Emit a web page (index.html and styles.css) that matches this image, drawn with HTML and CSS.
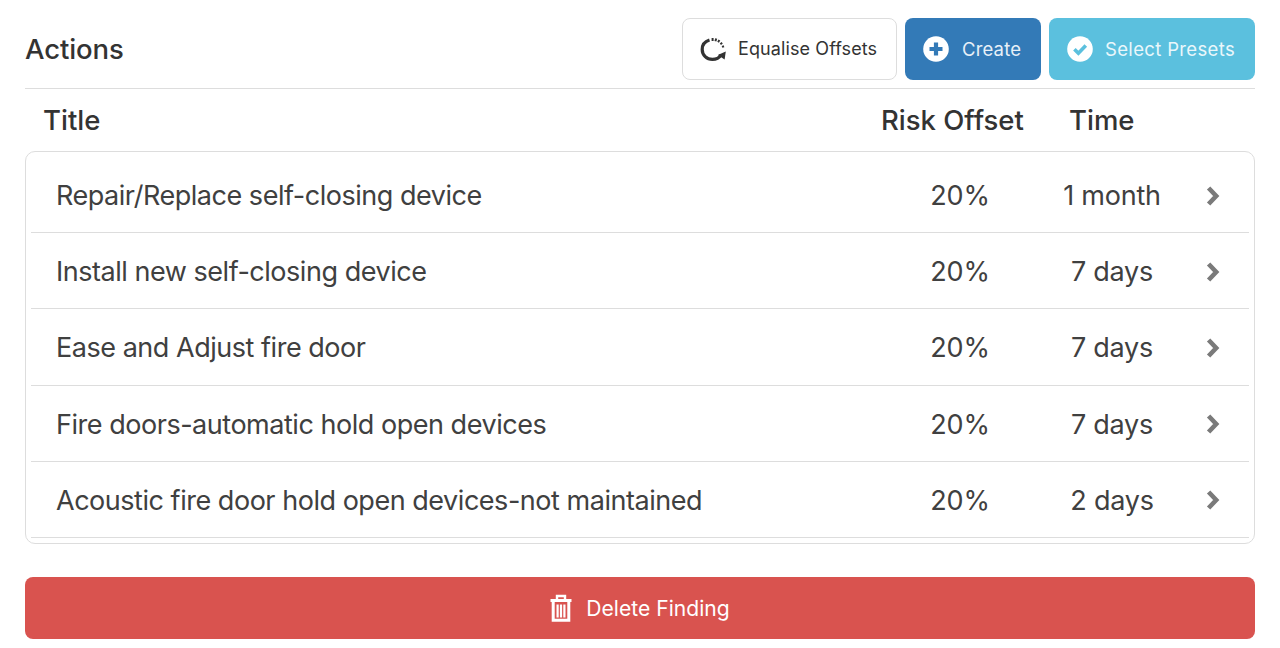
FILE: index.html
```html
<!DOCTYPE html>
<html lang="en">
<head>
<meta charset="utf-8">
<title>Actions</title>
<link rel="stylesheet" href="styles.css">
</head>
<body>
<main class="page">
  <header class="head">
    <h2 class="head-title">Actions</h2>
    <div class="head-actions">
      <button class="btn btn-default">
        <svg class="ico-eq" viewBox="0 0 28 28" width="28" height="28" aria-hidden="true">
          <path d="M10.5 5C6 6.4 3.2 10 3.2 14.4 3.2 20.2 7.8 24.4 13.4 24.4c3.6 0 6.8-1.6 8.7-4.6" fill="none" stroke="#333" stroke-width="3.2"/>
          <path d="M26.8 16.6l-1.2 8-6.8-4.6z" fill="#333"/>
          <g stroke="#333" stroke-width="2" fill="none">
            <path d="M13.6 3v3"/><path d="M17.2 3.4l-.8 2.8"/><path d="M20.4 5l-1.3 2.2"/><path d="M23.2 7.8l-1.8 1.4"/><path d="M25 11.2l-2 .7"/>
          </g>
        </svg>
        <span>Equalise Offsets</span>
      </button>
      <button class="btn btn-primary">
        <svg viewBox="0 0 26 26" width="26" height="26" aria-hidden="true">
          <circle cx="13" cy="13" r="12.8" fill="#fff"/>
          <path d="M13 6.5v13M6.5 13h13" stroke="#337ab7" stroke-width="4.2" fill="none"/>
        </svg>
        <span>Create</span>
      </button>
      <button class="btn btn-info">
        <svg viewBox="0 0 26 26" width="26" height="26" aria-hidden="true">
          <circle cx="13" cy="13" r="12.8" fill="#fff"/>
          <path d="M7.4 13.2l4 4 7.4-7.6" stroke="#5bc0de" stroke-width="3.6" fill="none"/>
        </svg>
        <span>Select Presets</span>
      </button>
    </div>
  </header>
  <div class="cols">
    <div class="col-title">Title</div>
    <div class="col-risk">Risk Offset</div>
    <div class="col-time">Time</div>
  </div>
  <ul class="list">
    <li class="row"><span class="r-title">Repair/Replace self-closing device</span><span class="r-risk">20%</span><span class="r-time">1 month</span><svg class="chev" viewBox="0 0 14 20" width="14" height="20" aria-hidden="true"><path d="M2.6 2l7.6 8-7.6 8" fill="none" stroke="#7a7a7a" stroke-width="4.6"/></svg></li>
    <li class="row"><span class="r-title">Install new self-closing device</span><span class="r-risk">20%</span><span class="r-time">7 days</span><svg class="chev" viewBox="0 0 14 20" width="14" height="20" aria-hidden="true"><path d="M2.6 2l7.6 8-7.6 8" fill="none" stroke="#7a7a7a" stroke-width="4.6"/></svg></li>
    <li class="row"><span class="r-title">Ease and Adjust fire door</span><span class="r-risk">20%</span><span class="r-time">7 days</span><svg class="chev" viewBox="0 0 14 20" width="14" height="20" aria-hidden="true"><path d="M2.6 2l7.6 8-7.6 8" fill="none" stroke="#7a7a7a" stroke-width="4.6"/></svg></li>
    <li class="row"><span class="r-title">Fire doors-automatic hold open devices</span><span class="r-risk">20%</span><span class="r-time">7 days</span><svg class="chev" viewBox="0 0 14 20" width="14" height="20" aria-hidden="true"><path d="M2.6 2l7.6 8-7.6 8" fill="none" stroke="#7a7a7a" stroke-width="4.6"/></svg></li>
    <li class="row"><span class="r-title">Acoustic fire door hold open devices-not maintained</span><span class="r-risk">20%</span><span class="r-time">2 days</span><svg class="chev" viewBox="0 0 14 20" width="14" height="20" aria-hidden="true"><path d="M2.6 2l7.6 8-7.6 8" fill="none" stroke="#7a7a7a" stroke-width="4.6"/></svg></li>
  </ul>
  <button class="btn-danger">
    <svg viewBox="0 0 22 28" width="22" height="28" aria-hidden="true">
      <path d="M0.5 6.5h21" stroke="#fff" stroke-width="3" fill="none"/>
      <path d="M7 6V2h8v4" stroke="#fff" stroke-width="2.4" fill="none"/>
      <path d="M3.2 7v19.2h15.6V7" stroke="#fff" stroke-width="3" fill="none"/>
      <path d="M7.6 10.5v13M11 10.5v13M14.4 10.5v13" stroke="#fff" stroke-width="2.2" fill="none"/>
    </svg>
    <span>Delete Finding</span>
  </button>
</main>
</body>
</html>
```
FILE: styles.css
```css
* { box-sizing: border-box; }
html, body { margin: 0; padding: 0; background: #fff; }
body {
  font-family: Inter, "Liberation Sans", sans-serif;
  color: #333;
  overflow: hidden;
}
.page { width: 1280px; height: 648px; padding: 18px 25px 0; }
.head {
  display: flex;
  justify-content: space-between;
  align-items: center;
  height: 71px;
  padding-bottom: 9px;
  border-bottom: 1px solid #ddd;
}
.head-title { margin: 0; font-size: 27.5px; font-weight: 500; line-height: 62px; color: #333; letter-spacing: -.1px; }
.head-actions { display: flex; gap: 8px; }
.btn {
  display: flex;
  align-items: center;
  height: 62px;
  border: 1px solid transparent;
  border-radius: 8px;
  font: 400 18px Inter, "Liberation Sans", sans-serif;
  padding: 0;
  white-space: nowrap;
}
.btn-default { width: 215px; padding-left: 16px; gap: 11px; background: #fff; border-color: #ddd; color: #333; letter-spacing: .1px; }
.btn-primary { width: 136px; padding-left: 17px; gap: 13px; background: #337ab7; color: #e8f0f7; font-size: 18.5px; letter-spacing: .15px; }
.btn-info { width: 206px; padding-left: 17px; gap: 12px; background: #5bc0de; color: #eaf7fb; font-size: 18.5px; letter-spacing: .35px; }
.cols {
  display: flex;
  align-items: center;
  height: 62px;
  padding-left: 18px;
  font-size: 27.5px;
  font-weight: 500;
}
.col-title { width: 838px; }
.col-risk { width: 188px; }
.list {
  list-style: none;
  margin: 0;
  padding: 5px 5px 6px;
  height: 393px;
  border: 1px solid #ddd;
  border-radius: 10px;
}
.row {
  display: flex;
  align-items: center;
  height: 76.2px;
  padding-left: 25px;
  padding-top: 2px;
  border-bottom: 1px solid #ddd;
  font-size: 27px;
  color: #404040;
}
.r-title { width: 859px; letter-spacing: -.47px; }
.r-risk { width: 90px; text-align: center; letter-spacing: -.2px; }
.r-time { width: 170px; text-align: center; margin-left: 22px; letter-spacing: -.25px; }
.chev { margin-left: 9px; }
.btn-danger {
  display: flex;
  align-items: center;
  justify-content: center;
  gap: 14px;
  width: 100%;
  height: 62px;
  margin-top: 33px;
  border: 0;
  border-radius: 8px;
  background: #d9534f;
  color: #fff;
  font: 400 21.1px Inter, "Liberation Sans", sans-serif;
}
```
